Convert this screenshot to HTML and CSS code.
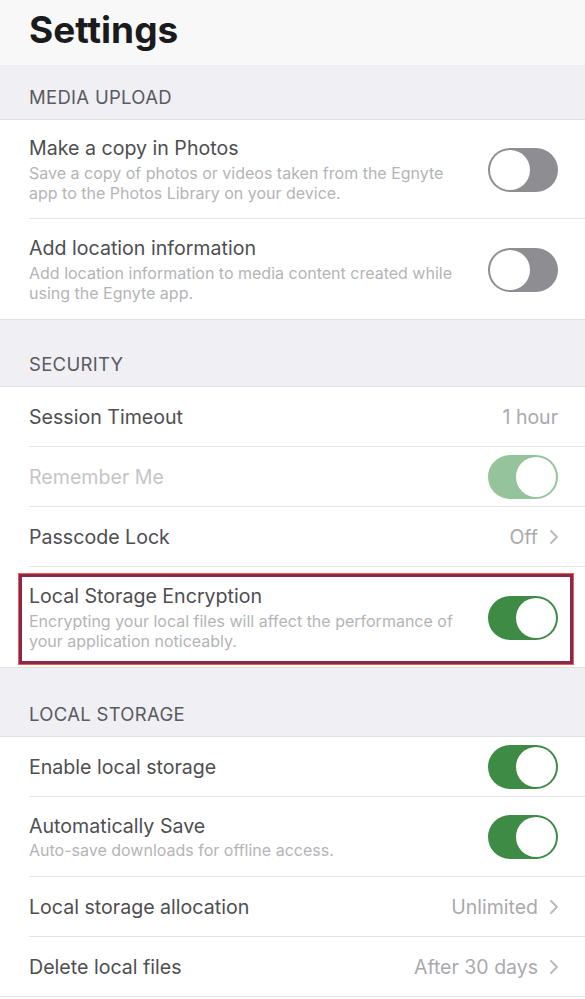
FILE: index.html
```html
<!DOCTYPE html>
<html lang="en">
<head>
<meta charset="utf-8">
<title>Settings</title>
<link rel="stylesheet" href="styles.css">
</head>
<body>
<div class="page">
  <header class="topbar"><h1 class="page-title">Settings</h1></header>

  <section class="group">
    <div class="group-title first">MEDIA UPLOAD</div>
    <ul class="rows">
      <li class="row">
        <div class="cell tall">
          <div class="text">
            <div class="title">Make a copy in Photos</div>
            <div class="desc">Save a copy of photos or videos taken from the Egnyte<br>app to the Photos Library on your device.</div>
          </div>
          <span class="switch off"><span class="knob"></span></span>
        </div>
      </li>
      <li class="row">
        <div class="cell tall last">
          <div class="text">
            <div class="title">Add location information</div>
            <div class="desc">Add location information to media content created while<br>using the Egnyte app.</div>
          </div>
          <span class="switch off"><span class="knob"></span></span>
        </div>
      </li>
    </ul>
  </section>

  <section class="group">
    <div class="group-title">SECURITY</div>
    <ul class="rows">
      <li class="row">
        <div class="cell">
          <div class="title">Session Timeout</div>
          <span class="value">1 hour</span>
        </div>
      </li>
      <li class="row">
        <div class="cell">
          <div class="title disabled">Remember Me</div>
          <span class="switch on dim"><span class="knob"></span></span>
        </div>
      </li>
      <li class="row">
        <div class="cell">
          <div class="title">Passcode Lock</div>
          <span class="value">Off<svg class="chev" width="10" height="16" viewBox="0 0 10 16"><polyline points="2,2 8,8 2,14" fill="none" stroke="#b8b8bc" stroke-width="1.8" stroke-linecap="round" stroke-linejoin="round"/></svg></span>
        </div>
      </li>
      <li class="row highlighted">
        <div class="cell tall last">
          <div class="text">
            <div class="title">Local Storage Encryption</div>
            <div class="desc">Encrypting your local files will affect the performance of<br>your application noticeably.</div>
          </div>
          <span class="switch on"><span class="knob"></span></span>
        </div>
        <span class="highlight-box"></span>
      </li>
    </ul>
  </section>

  <section class="group">
    <div class="group-title">LOCAL STORAGE</div>
    <ul class="rows bottom">
      <li class="row">
        <div class="cell">
          <div class="title">Enable local storage</div>
          <span class="switch on"><span class="knob"></span></span>
        </div>
      </li>
      <li class="row">
        <div class="cell medium">
          <div class="text">
            <div class="title">Automatically Save</div>
            <div class="desc">Auto-save downloads for offline access.</div>
          </div>
          <span class="switch on"><span class="knob"></span></span>
        </div>
      </li>
      <li class="row">
        <div class="cell">
          <div class="title">Local storage allocation</div>
          <span class="value">Unlimited<svg class="chev" width="10" height="16" viewBox="0 0 10 16"><polyline points="2,2 8,8 2,14" fill="none" stroke="#b8b8bc" stroke-width="1.8" stroke-linecap="round" stroke-linejoin="round"/></svg></span>
        </div>
      </li>
      <li class="row">
        <div class="cell last">
          <div class="title">Delete local files</div>
          <span class="value">After 30 days<svg class="chev" width="10" height="16" viewBox="0 0 10 16"><polyline points="2,2 8,8 2,14" fill="none" stroke="#b8b8bc" stroke-width="1.8" stroke-linecap="round" stroke-linejoin="round"/></svg></span>
        </div>
      </li>
    </ul>
  </section>
</div>
</body>
</html>
```
FILE: styles.css
```css
* { box-sizing: border-box; }
html, body { margin: 0; padding: 0; background: #ffffff; }
body {
  font-family: "Inter", "Liberation Sans", Arial, sans-serif;
  width: 585px;
  -webkit-font-smoothing: antialiased;
}
.page { width: 585px; background: #fff; }

.topbar {
  height: 65px;
  background: #f8f8f8;
  padding: 9px 0 0 29px;
}
.page-title {
  margin: 0;
  font-size: 37px;
  line-height: 42px;
  font-weight: 700;
  color: #1b1b1d;
  letter-spacing: 0;
}

.group-title {
  background: #efeff4;
  border-top: 1px solid #e2e2e6;
  border-bottom: 1px solid #e2e2e6;
  padding: 36px 0 12px 29px;
  font-size: 18.5px;
  line-height: 20px;
  color: #5a5a5f;
  letter-spacing: 0.3px;
}
.group-title.first {
  border-top: none;
  padding-top: 22px;
}
.group + .group .group-title { padding-top: 34px; }
.group:last-child .group-title { padding-top: 36px; }

.rows { list-style: none; margin: 0; padding: 0; }
.rows.bottom { border-bottom: 1px solid #e2e2e6; }

.row { padding-left: 29px; background: #fff; }
.row.highlighted { position: relative; }

.cell {
  display: flex;
  align-items: center;
  justify-content: space-between;
  height: 60px;
  padding: 0 27px 0 0;
  border-bottom: 1px solid #e4e4e8;
}
.cell.last { border-bottom: none; height: 59px; }
.cell.tall { height: 99px; padding-top: 1px; }
.cell.tall.last { height: 100px; }
.cell.medium { height: 80px; }

.text { display: flex; flex-direction: column; }
.title {
  font-size: 19.6px;
  line-height: 24px;
  color: #4e4e51;
}
.title.disabled { color: #c5c5c8; }
.desc {
  font-size: 16px;
  line-height: 20px;
  color: #b4b4b7;
  margin-top: 3px;
  white-space: nowrap;
}
.cell.medium .desc { margin-top: 2px; }

.value {
  display: flex;
  align-items: center;
  gap: 11px;
  font-size: 19.5px;
  line-height: 24px;
  color: #a9a9ad;
}
.chev { display: block; margin-right: -1px; }

.switch {
  flex: none;
  width: 70px;
  height: 44px;
  border-radius: 22px;
  padding: 2px;
  display: flex;
  background: #8e8d92;
}
.switch.on { background: #3d8b45; justify-content: flex-end; }
.switch.on.dim { background: #95c39c; }
.knob {
  width: 40px;
  height: 40px;
  border-radius: 50%;
  background: #ffffff;
}

.highlight-box {
  position: absolute;
  left: 19px;
  right: 12px;
  top: 7px;
  bottom: 3px;
  border: 3px solid #8a2847;
  box-shadow: 0 0 0 1px #ee5d4d;
  pointer-events: none;
}
```
